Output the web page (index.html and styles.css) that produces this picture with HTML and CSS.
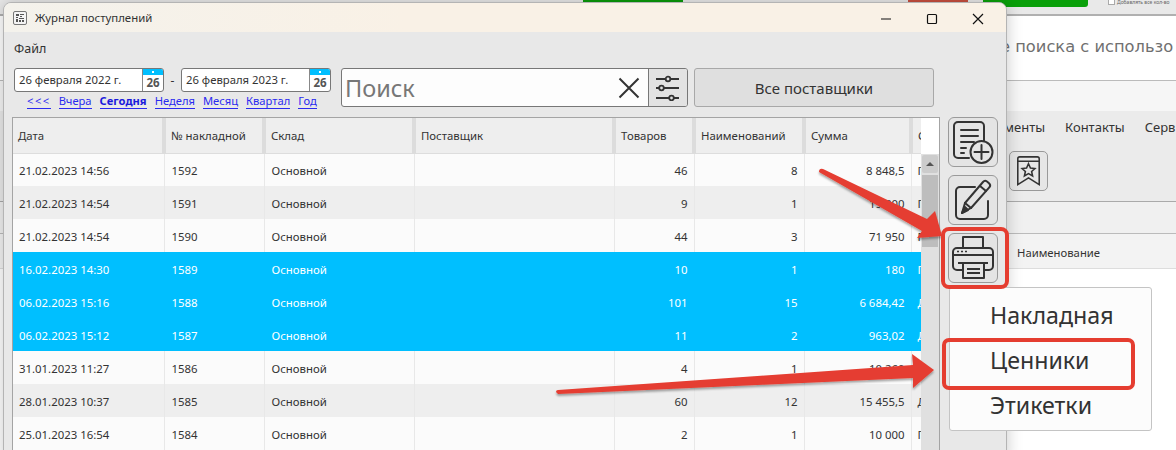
FILE: index.html
```html
<!DOCTYPE html>
<html lang="ru">
<head>
<meta charset="utf-8">
<title>Журнал поступлений</title>
<link rel="stylesheet" href="styles.css">
</head>
<body>
<div class="desktop">
  <div class="behind">
    <div class="b-top">
      <span class="b-strip b-green1"></span>
      <span class="b-strip b-red"></span>
      <span class="b-strip b-green2"></span>
      <span class="b-check"></span>
      <span class="b-small">Добавлять все кол-во</span>
    </div>
    <div class="b-hero">е поиска с использо</div>
    <div class="b-band"></div>
    <div class="b-menu"><span>менты</span><span>Контакты</span><span>Серв</span></div>
    <div class="b-tools">
      <span class="b-bookmark">
        <svg viewBox="0 0 38 38" width="38" height="38"><path d="M8 6.500a2 2 0 0 1 2-2h18a2 2 0 0 1 2 2V33l-11-7-11 7z M8 9h22" fill="none" stroke="#333" stroke-width="1.600"/><path d="M19 11.500l2 4.400 4.600.5-3.400 3.100 1 4.600-4.200-2.400-4.200 2.400 1-4.600-3.400-3.100 4.600-.5z" fill="none" stroke="#333" stroke-width="1.600"/></svg>
      </span>
    </div>
    <div class="b-band2"></div>
    <div class="b-head">Наименование</div>
  </div>

  <section class="window">
    <header class="titlebar">
      <svg class="app-icon" viewBox="0 0 14 14" width="14" height="14"><rect x=".5" y=".5" width="13" height="13" rx="1.500" fill="#f4f4f4" stroke="#777"/><path d="M3 3h3v2H3zM7 3h4v1H7zM7 5h2v1H7zM3 6h2v1H3zM6 7h5v1H6zM3 8h2v3H3zM6 9h2v2H6zM9 9h2v2H9z" fill="#555"/></svg>
      <span class="title-text">Журнал поступлений</span>
      <span class="win-btns">
        <svg viewBox="0 0 46 30" width="46" height="30"><path d="M18 16h10" stroke="#111" stroke-width="1.200"/></svg>
        <svg viewBox="0 0 46 30" width="46" height="30"><rect x="18.500" y="11.500" width="9" height="9" rx="1" fill="none" stroke="#111" stroke-width="1.200"/></svg>
        <svg viewBox="0 0 46 30" width="46" height="30"><path d="M18 11l10 10M28 11L18 21" stroke="#111" stroke-width="1.200"/></svg>
      </span>
    </header>
    <div class="menubar">Файл</div>
    <div class="filters">
      <div class="period">
        <div class="dates">
          <div class="date-field"><span class="date-text">26 февраля 2022 г.</span><span class="cal"><i></i><b>26</b></span></div>
          <span class="dash">-</span>
          <div class="date-field"><span class="date-text">26 февраля 2023 г.</span><span class="cal"><i></i><b>26</b></span></div>
        </div>
        <nav class="quick">
          <a class="back">&lt;&lt;&lt;</a><a>Вчера</a><a class="now">Сегодня</a><a>Неделя</a><a>Месяц</a><a>Квартал</a><a>Год</a>
        </nav>
      </div>
      <div class="search">
        <span class="search-text">Поиск</span>
        <svg class="search-x" viewBox="0 0 22 22" width="22" height="22"><path d="M1.500 1.500l19 19M20.500 1.500l-19 19" stroke="#333" stroke-width="2"/></svg>
        <span class="search-opt">
          <svg viewBox="0 0 26 26" width="26" height="26" fill="none" stroke="#333" stroke-width="1.800"><path d="M1 4h10M16 4h8M1 13h3M9 13h15M1 23h13M19 23h5"/><circle cx="13" cy="4" r="2.300"/><circle cx="6.500" cy="13" r="2.300"/><circle cx="16.500" cy="23" r="2.300"/></svg>
        </span>
      </div>
      <button class="suppliers">Все поставщики</button>
    </div>
    <div class="main">
      <div class="grid-wrap">
        <div class="grid-clip">
          <table class="grid">
            <colgroup><col class="c1"><col class="c2"><col class="c3"><col class="c4"><col class="c5"><col class="c6"><col class="c7"><col class="c8"></colgroup>
            <thead><tr><th>Дата</th><th>№ накладной</th><th>Склад</th><th>Поставщик</th><th>Товаров</th><th>Наименований</th><th>Сумма</th><th>Статус</th></tr></thead>
            <tbody>
              <tr><td>21.02.2023 14:56</td><td>1592</td><td>Основной</td><td></td><td class="n">46</td><td class="n">8</td><td class="n">8 848,5</td><td>Приход</td></tr>
              <tr><td>21.02.2023 14:54</td><td>1591</td><td>Основной</td><td></td><td class="n">9</td><td class="n">1</td><td class="n">19 800</td><td>Приход</td></tr>
              <tr><td>21.02.2023 14:54</td><td>1590</td><td>Основной</td><td></td><td class="n">44</td><td class="n">3</td><td class="n">71 950</td><td>Приход</td></tr>
              <tr class="sel"><td>16.02.2023 14:30</td><td>1589</td><td>Основной</td><td></td><td class="n">10</td><td class="n">1</td><td class="n">180</td><td>Приход</td></tr>
              <tr class="sel"><td>06.02.2023 15:16</td><td>1588</td><td>Основной</td><td></td><td class="n">101</td><td class="n">15</td><td class="n">6 684,42</td><td>Долг</td></tr>
              <tr class="sel"><td>06.02.2023 15:12</td><td>1587</td><td>Основной</td><td></td><td class="n">11</td><td class="n">2</td><td class="n">963,02</td><td>Долг</td></tr>
              <tr><td>31.01.2023 11:27</td><td>1586</td><td>Основной</td><td></td><td class="n">4</td><td class="n">1</td><td class="n">10 260</td><td>Приход</td></tr>
              <tr><td>28.01.2023 10:37</td><td>1585</td><td>Основной</td><td></td><td class="n">60</td><td class="n">12</td><td class="n">15 455,5</td><td>Долг</td></tr>
              <tr><td>25.01.2023 16:54</td><td>1584</td><td>Основной</td><td></td><td class="n">2</td><td class="n">1</td><td class="n">10 000</td><td>Приход</td></tr>
            </tbody>
          </table>
        </div>
        <div class="scroll">
          <div class="scroll-head"></div>
          <div class="scroll-up"><svg viewBox="0 0 16 16" width="16" height="16"><path d="M4 10l4-4 4 4z" fill="#555"/></svg></div>
          <div class="scroll-thumb"></div>
        </div>
      </div>
      <aside class="tools">
        <button class="tool">
          <svg viewBox="0 0 50 50" width="50" height="50" fill="none" stroke="#333" stroke-width="2" stroke-linecap="round"><path d="M21 41H10a4 4 0 0 1-4-4V9a4 4 0 0 1 4-4h22a4 4 0 0 1 4 4v15"/><path d="M13 13h17M13 19h17M13 25h13M13 31h5M13 36h3"/><circle cx="33.500" cy="35" r="11"/><path d="M33.500 28v14M26.500 35h14"/></svg>
        </button>
        <button class="tool">
          <svg viewBox="0 0 50 50" width="50" height="50" fill="none" stroke="#333" stroke-width="2" stroke-linecap="round" stroke-linejoin="round"><path d="M27 12H12a4 4 0 0 0-4 4v24a4 4 0 0 0 4 4h24a4 4 0 0 0 4-4V26"/><path d="M14 38l3-10L35 7a3 3 0 0 1 4-.5l2 1.700a3 3 0 0 1 .5 4L23 33z"/><path d="M17 28l6 5M32 11l6 5"/><path d="M14 38l6-3-3-3z" fill="#333"/></svg>
        </button>
        <button class="tool">
          <svg viewBox="0 0 50 50" width="50" height="50" fill="none" stroke="#333" stroke-width="2" stroke-linejoin="round"><path d="M15 15V4h20v11"/><path d="M14 37H9a4 4 0 0 1-4-4V19a4 4 0 0 1 4-4h32a4 4 0 0 1 4 4v14a4 4 0 0 1-4 4h-5"/><path d="M5 22h40"/><path d="M10 30h30"/><path d="M15 30v15h21V30"/><path d="M19 36h13M19 40h13"/><path d="M9 18.500h2M13 18.500h2M17 18.500h2" stroke-width="1.500"/></svg>
        </button>
      </aside>
    </div>
  </section>

  <ul class="popup">
    <li>Накладная</li>
    <li>Ценники</li>
    <li>Этикетки</li>
  </ul>

  <svg class="marks" viewBox="0 0 1176 450" width="1176" height="450">
    <defs><filter id="sh" x="-10%" y="-20%" width="120%" height="160%"><feDropShadow dx="0" dy="2" stdDeviation="1" flood-color="#000" flood-opacity=".35"/></filter></defs>
    <g filter="url(#sh)" fill="#e53d30">
      <path d="M819 172Q819 168 823 169L927 219L935 211L942 236L917 238L922 231Z"/>
      <path d="M556 392Q556 390 558 390L913 365L912 354L934 370L913 388L913 378L558 394Z"/>
    </g>
    <rect x="943" y="229" width="64" height="58" rx="6" fill="none" stroke="#e53d30" stroke-width="4"/>
    <rect x="944" y="340" width="189" height="48" rx="5" fill="none" stroke="#e53d30" stroke-width="4"/>
  </svg>
</div>
</body>
</html>
```
FILE: styles.css
```css
* { box-sizing: border-box; }
html, body { margin: 0; padding: 0; }
body { background: #fff; font-family: "Noto Sans", "Open Sans", sans-serif; color: #333; overflow: hidden; }
.desktop { position: relative; width: 1176px; height: 450px; overflow: hidden; }

/* page behind the window */
.behind { position: absolute; inset: 0; display: flex; flex-direction: column; background: #fff; }
.b-top { position: relative; height: 16px; background: #e9e9e9; border-bottom: 2px solid #b0b0b0; flex: none; }
.b-strip { position: absolute; top: 0; }
.b-green1 { left: 583px; width: 100px; height: 2px; background: #0a9a0a; }
.b-red { left: 908px; width: 60px; height: 3px; background: #c8503f; }
.b-green2 { left: 983px; width: 105px; height: 7px; background: #0aa00a; border-radius: 0 0 3px 3px; }
.b-check { position: absolute; left: 1108px; top: 0; width: 7px; height: 5px; background: #fff; border: 1px solid #aaa; border-top: 0; }
.b-small { position: absolute; left: 1117px; top: -1px; font-size: 5px; line-height: 7px; color: #666; white-space: nowrap; }
.b-hero { height: 64px; padding: 19px 0 0 1000px; font-family: "DejaVu Sans", sans-serif; font-size: 16.300px; line-height: 24px; color: #707070; white-space: nowrap; flex: none; }
.b-band { height: 31px; background: #f6f6f6; border-top: 1px solid #bbb; flex: none; }
.b-menu { height: 40px; background: #ebebeb; padding: 7px 0 0 1004px; display: flex; gap: 20px; font-size: 13px; line-height: 18px; color: #333; white-space: nowrap; flex: none; }
.b-tools { height: 50px; padding: 0 0 0 1009px; background: #ebebeb; flex: none; }
.b-bookmark { display: block; width: 39px; height: 40px; background: #e6e6e6; border: 1px solid #999; border-radius: 5px; }
.b-bookmark svg { display: block; margin: 0 auto; width: 37px; height: 38px; }
.b-band2 { height: 32px; background: #f0f0f0; border-top: 1px solid #aaa; flex: none; }
.b-head { height: 36px; padding: 11px 0 0 1017px; background: #f3f3f3; border-top: 1px solid #bbb; border-bottom: 1px solid #ddd; font-size: 11.300px; line-height: 16px; color: #333; flex: none; }

/* window */
.window { position: absolute; left: 3px; top: 2px; width: 1004px; height: 460px; background: #e8e8e8; border: 1px solid #b4b4b4; border-radius: 8px 8px 0 0; overflow: hidden; display: flex; flex-direction: column; box-shadow: 0 0 16px rgba(0,0,0,.22); }
.titlebar { height: 29px; flex: none; display: flex; align-items: center; padding-left: 9px; background: linear-gradient(90deg, #f4f2ec, #f9f1e6 40%, #f9f1e6); }
.app-icon { flex: none; }
.title-text { margin-left: 8px; font-size: 11.400px; color: #333; }
.win-btns { margin-left: auto; display: flex; margin-right: 5px; }
.win-btns svg { display: block; }
.menubar { height: 36px; flex: none; padding: 8px 0 0 10px; font-size: 12.500px; line-height: 18px; color: #333; }
.filters { flex: none; height: 42px; padding-left: 10px; display: flex; align-items: flex-start; }
.period { width: 327px; flex: none; }
.dates { display: flex; align-items: center; height: 24px; }
.date-field { width: 150px; height: 24px; background: #fff; border: 1px solid #777; border-radius: 3px; display: flex; overflow: hidden; }
.date-text { flex: 1; padding-left: 4px; font-size: 11.300px; line-height: 21px; color: #333; white-space: nowrap; }
.cal { width: 21px; flex: none; border-left: 1px solid #888; display: flex; flex-direction: column; }
.cal i { height: 6px; background: #00bfff; display: flex; align-items: center; justify-content: center; }
.cal i::after { content: ""; width: 2px; height: 2px; background: #fff; }
.cal b { font-size: 11.500px; line-height: 16px; text-align: center; color: #555; }
.dash { width: 17px; text-align: center; font-size: 12px; color: #333; }
.quick { display: flex; gap: 8px; padding: 1px 0 0 13px; }
.quick a { font-size: 11.200px; line-height: 15px; color: #2a2af0; border-bottom: 1px solid #2a2af0; white-space: nowrap; }
.quick .back { letter-spacing: 1.500px; }
.quick .now { font-weight: 700; color: #1b1bdc; }
.search { width: 347px; height: 39px; background: #fdfdfd; border: 1px solid #777; border-radius: 3px; display: flex; align-items: center; flex: none; overflow: hidden; }
.search-text { flex: 1; padding-left: 3px; font-size: 23.500px; line-height: 40px; color: #777; }
.search-x { margin-right: 8px; }
.search-opt { width: 39px; height: 37px; background: #e2e2e2; border-left: 1px solid #777; display: flex; align-items: center; justify-content: center; flex: none; }
.suppliers { width: 240px; height: 39px; margin-left: 6px; background: #dfdfdf; border: 1px solid #a8a8a8; border-radius: 3px; font: inherit; font-size: 15px; color: #333; flex: none; padding: 0; }

.main { flex: 1; display: flex; align-items: flex-start; padding: 7px 0 0 8px; }
.grid-wrap { width: 928px; height: 360px; flex: none; display: flex; background: #fff; border: 1px solid #a4a4a4; }
.grid-clip { width: 908px; flex: none; overflow: hidden; }
.grid { border-collapse: collapse; table-layout: fixed; width: 1000px; font-size: 11.400px; color: #333; }
.c1 { width: 151px; } .c2 { width: 100px; } .c3 { width: 150px; } .c4 { width: 200px; }
.c5 { width: 80px; } .c6 { width: 110px; } .c7 { width: 107px; } .c8 { width: 102px; }
.grid th { height: 35px; padding: 1px 0 0 5px; text-align: left; font-weight: 400; background: #eee; border-right: 4px solid #dcdcdc; border-bottom: 1px solid #ddd; white-space: nowrap; overflow: hidden; }
.grid td { height: 33px; padding: 1px 6px 0; background: #fbfbfb; border-right: 1px solid #e8e8e8; white-space: nowrap; overflow: hidden; }
.grid td:nth-child(2), .grid td:nth-child(3) { padding-left: 7px; }
.grid tbody tr:nth-child(even) td { background: #eee; }
.grid td.n { text-align: right; }
.grid tbody tr.sel td { background: #00bfff; color: #fff; border-right-color: #00bfff; }
.scroll { width: 18px; flex: none; display: flex; flex-direction: column; background: #e0e0e0; }
.scroll-head { height: 36px; background: #fff; flex: none; }
.scroll-up { height: 18px; margin: 1px 1px 0; background: #ccc; border-radius: 2px; display: flex; align-items: center; justify-content: center; flex: none; }
.scroll-up svg { display: block; }
.scroll-thumb { height: 72px; margin: 2px 1px 0; background: #bdbdbd; flex: none; }
.tools { width: 50px; margin-left: 8px; display: flex; flex-direction: column; gap: 8px; flex: none; }
.tool { width: 50px; height: 50px; padding: 0; background: #e4e4e4; border: 1px solid #9a9a9a; border-radius: 6px; display: block; overflow: hidden; }
.tool svg { display: block; margin: -1px; }

/* popup and annotations */
.popup { position: absolute; left: 949px; top: 287px; width: 203px; height: 144px; margin: 0; padding: 5px 0 0 40px; list-style: none; background: #fcfcfc; border: 1px solid #c4c4c4; border-radius: 3px; font-size: 23.200px; color: #333; }
.popup li { height: 45px; line-height: 45px; }
.marks { position: absolute; left: 0; top: 0; pointer-events: none; }
```
